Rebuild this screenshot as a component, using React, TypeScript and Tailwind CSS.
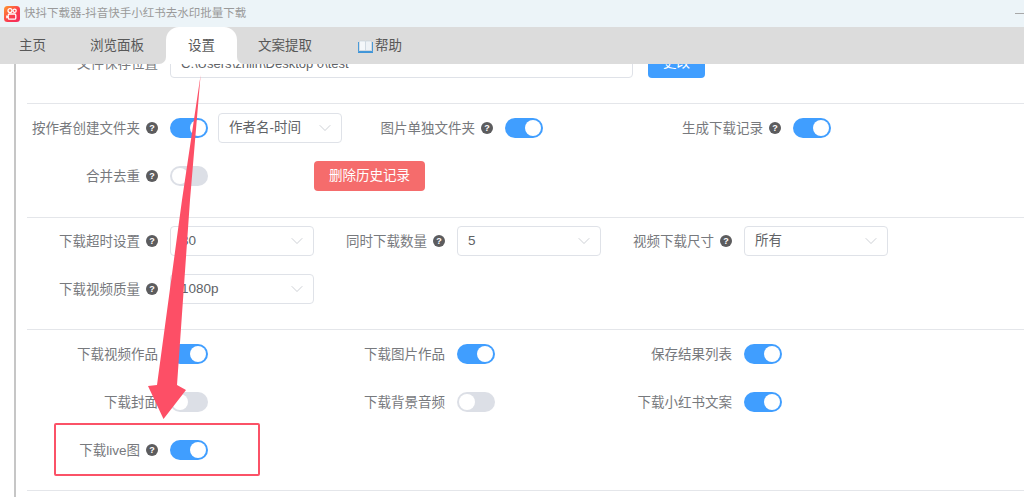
import React from "react";
import { ChevronDown } from "lucide-react";

const Help = () => (
  <span className="flex h-[12px] w-[12px] shrink-0 items-center justify-center rounded-full bg-[#5c5c5e] text-[9px] font-bold leading-none text-white">?</span>
);

const Switch = ({ on = true }: { on?: boolean }) => (
  <span className={`flex h-[20px] w-[38px] shrink-0 items-center rounded-full p-[2px] ${on ? "justify-end bg-[#409eff]" : "justify-start bg-[#dcdfe6]"}`}>
    <span className="h-[16px] w-[16px] rounded-full bg-white" />
  </span>
);

const Select = ({ value, w = "w-[144px]" }: { value: string; w?: string }) => (
  <span className={`flex h-[30px] shrink-0 items-center justify-between rounded-[4px] border border-[#dfe2e8] bg-white pl-[10px] pr-[6px] text-[13.5px] text-[#606266] ${w}`}>
    <span className="pt-[1px]">{value}</span>
    <ChevronDown size={20} strokeWidth={0.8} className="text-[#b4b8c0]" />
  </span>
);

const Item = ({ label, help = false, w = "w-[287px]", children }: { label: string; help?: boolean; w?: string; children: React.ReactNode }) => (
  <div className={`flex h-[30px] shrink-0 items-center ${w}`}>
    <div className="flex w-[143px] shrink-0 items-center justify-end gap-[6px] whitespace-nowrap pr-[12px] text-[13.5px] text-[#77797d]">
      <span className="pt-[2px]">{label}</span>
      {help && <Help />}
    </div>
    {children}
  </div>
);

const Row = ({ children }: { children: React.ReactNode }) => <div className="flex">{children}</div>;

const Tab = ({ label, className = "" }: { label: React.ReactNode; className?: string }) => (
  <div className={`flex h-full shrink-0 items-center pt-[1px] text-[13.5px] text-[#585858] ${className}`}>{label}</div>
);

const Logo = () => (
  <svg width="16" height="16" viewBox="0 0 16 16" className="shrink-0">
    <defs>
      <linearGradient id="lg" x1="0" y1="0" x2="1" y2="1">
        <stop offset="0" stopColor="#ff9a2e" />
        <stop offset="0.55" stopColor="#fb3f4c" />
        <stop offset="1" stopColor="#f5285f" />
      </linearGradient>
    </defs>
    <rect width="16" height="16" rx="3.5" fill="url(#lg)" />
    <circle cx="6" cy="4.6" r="2" fill="none" stroke="#fff" strokeWidth="1.3" />
    <circle cx="10.6" cy="4.8" r="1.6" fill="none" stroke="#fff" strokeWidth="1.3" />
    <rect x="4.2" y="8" width="7.6" height="5.2" rx="1.2" fill="none" stroke="#fff" strokeWidth="1.3" />
    <path d="M2.2 9.2 L4.2 10.2 V11.4 L2.2 12.4 Z" fill="#fff" />
  </svg>
);

const Book = () => (
  <svg width="15" height="13" viewBox="0 0 15 13" className="mr-[2px] shrink-0">
    <path d="M0.5 2 V11.5 H14.5 V2" fill="none" stroke="#4a9ad8" strokeWidth="1" />
    <path d="M1.5 1 H6.5 Q7.5 1 7.5 2 V10.5 H1.5 Z" fill="#f4f7fa" stroke="#c4d0da" strokeWidth="0.6" />
    <path d="M13.5 1 H8.5 Q7.5 1 7.5 2 V10.5 H13.5 Z" fill="#eef2f6" stroke="#c4d0da" strokeWidth="0.6" />
    <path d="M0 11.5 H15 V13 H0 Z" fill="#3f95d8" />
  </svg>
);

export default function App() {
  return (
    <div className="relative flex h-[497px] w-[1024px] flex-col overflow-hidden bg-white font-['Liberation_Sans','Noto_Sans_CJK_SC',sans-serif]">
      <div className="flex h-[27px] shrink-0 items-center justify-between bg-[#ecf4f8] pl-[4px]">
        <div className="flex items-center gap-[4px]">
          <Logo />
          <span className="text-[11.5px] text-[#9a9a9a]">快抖下载器-抖音快手小红书去水印批量下载</span>
        </div>
        <span className="h-px w-[9px] bg-[#a8a8a8]" />
      </div>

      <div className="flex h-[37px] shrink-0 bg-[#dcdcdc]">
        <Tab label="主页" className="w-[68px] pl-[19px]" />
        <Tab label="浏览面板" className="w-[98px] pl-[22px]" />
        <div className="relative flex h-full w-[71px] shrink-0 items-center justify-center rounded-t-[13px] bg-white pt-[1px] text-[13.5px] text-[#585858]">
          设置
          <span className="absolute bottom-0 left-[-7px] h-[7px] w-[7px] bg-white">
            <span className="block h-full w-full rounded-br-[7px] bg-[#dcdcdc]" />
          </span>
          <span className="absolute bottom-0 right-[-7px] h-[7px] w-[7px] bg-white">
            <span className="block h-full w-full rounded-bl-[7px] bg-[#dcdcdc]" />
          </span>
        </div>
        <Tab label="文案提取" className="w-[121px] pl-[21px]" />
        <Tab label={<><Book />帮助</>} className="pl-0" />
      </div>

      <div className="min-h-0 flex-1 overflow-hidden pl-[14px]">
        <div className="flex h-full flex-col border-l-2 border-[#c6c6c6] pl-[11px]">
          <div className="-mt-[16px] shrink-0 border-b border-[#e4e6ea] pb-[25px]">
            <div className="flex h-[30px] items-center">
              <div className="w-[143px] shrink-0 whitespace-nowrap pr-[12px] pt-[2px] text-right text-[13.5px] text-[#77797d]">文件保存位置</div>
              <div className="flex h-[30px] w-[463px] items-center rounded-[4px] border border-[#dfe2e8] pl-[10px] pt-[1px] text-[13px] text-[#606266]">C:\Users\zhlin\Desktop 0\test</div>
              <div className="ml-[15px] flex h-[30px] w-[57px] items-center justify-center rounded-[4px] bg-[#409eff] pt-[1px] text-[13.5px] text-white">更改</div>
            </div>
          </div>

          <div className="flex shrink-0 flex-col gap-[18px] border-b border-[#e4e6ea] pb-[26px] pt-[9px]">
            <Row>
              <Item label="按作者创建文件夹" help w="w-[335px]">
                <Switch />
                <Select value="作者名-时间" w="ml-[10px] w-[124px]" />
              </Item>
              <Item label="图片单独文件夹" help w="w-[288px]"><Switch /></Item>
              <Item label="生成下载记录" help><Switch /></Item>
            </Row>
            <Row>
              <Item label="合并去重" help><Switch on={false} /></Item>
              <div className="flex h-[30px] w-[111px] items-center justify-center rounded-[4px] bg-[#f56c6c] pt-[1px] text-[13.5px] text-white">删除历史记录</div>
            </Row>
          </div>

          <div className="flex shrink-0 flex-col gap-[18px] border-b border-[#e4e6ea] pb-[25px] pt-[8px]">
            <Row>
              <Item label="下载超时设置" help><Select value="30" /></Item>
              <Item label="同时下载数量" help><Select value="5" /></Item>
              <Item label="视频下载尺寸" help><Select value="所有" /></Item>
            </Row>
            <Row>
              <Item label="下载视频质量" help><Select value="1080p" /></Item>
            </Row>
          </div>

          <div className="flex shrink-0 flex-col gap-[18px] border-b border-[#e4e6ea] pb-[25px] pt-[9px]">
            <Row>
              <Item label="下载视频作品"><Switch /></Item>
              <Item label="下载图片作品"><Switch /></Item>
              <Item label="保存结果列表"><Switch /></Item>
            </Row>
            <Row>
              <Item label="下载封面"><Switch on={false} /></Item>
              <Item label="下载背景音频"><Switch on={false} /></Item>
              <Item label="下载小红书文案"><Switch /></Item>
            </Row>
            <Row>
              <Item label="下载live图" help><Switch /></Item>
            </Row>
          </div>
        </div>
      </div>

      <div className="absolute left-[54px] top-[423px] h-[53px] w-[206px] rounded-[2px] border-2 border-[#fb5267]" />

      <svg className="pointer-events-none absolute left-0 top-0" width="1024" height="497" viewBox="0 0 1024 497">
        <path d="M200.6 75 L190 200 L177 385 L186 390 L163.5 419 L148 386 L157 385 L182 200 Z" fill="#fd4f66" />
      </svg>
    </div>
  );
}
